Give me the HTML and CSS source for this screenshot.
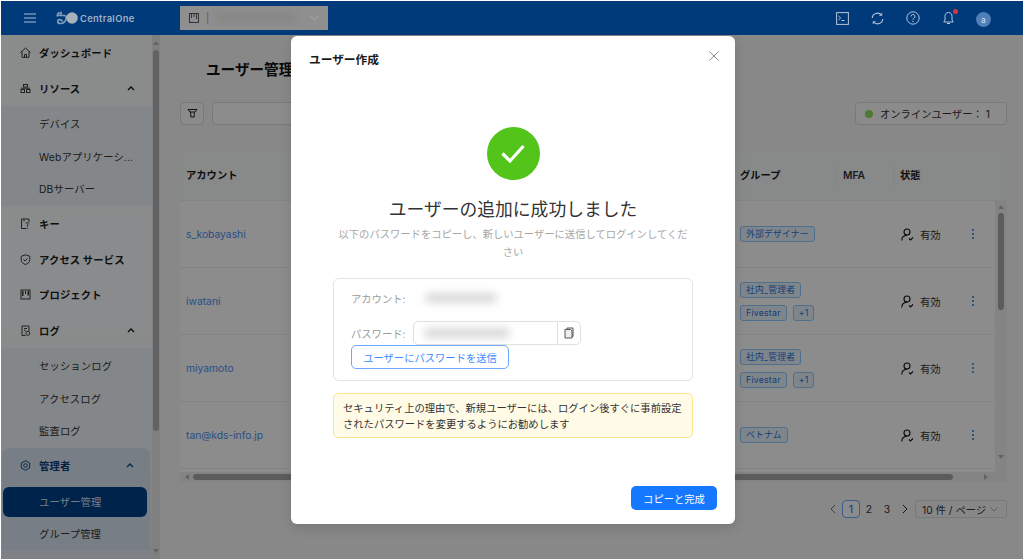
FILE: index.html
```html
<!DOCTYPE html>
<html lang="ja">
<head>
<meta charset="utf-8">
<title>ユーザー管理</title>
<link rel="stylesheet" href="styles.css">
</head>
<body>
<div class="app">
  <header class="topbar">
    <svg class="hamb" width="12" height="10" viewBox="0 0 12 10"><path d="M0 1h12M0 5h12M0 9h12" stroke="#a9bdd4" stroke-width="1.1"/></svg>
    <div class="logo">
      <svg width="22" height="14" viewBox="0 0 22 14"><path d="M1.200 5.500c.2-2.500 1.300-3.600 2.600-3.800M5 .8v3.500M1.500 4.500h7c1.300 0 1.700 1 1.700 2.500 0 3-2.500 5.500-5.500 5.500-1.700 0-3-.8-3-2s1-1.800 2-1.800c1.300 0 2.200.7 2.800 1.800" fill="none" stroke="#7f9cbd" stroke-width="1.700"/><circle cx="16" cy="7" r="5.800" fill="#a9b1ba"/></svg>
      <span class="logo-text">CentralOne</span>
    </div>
    <div class="tenant">
      <svg width="10" height="10" viewBox="0 0 10 10"><rect x=".5" y=".5" width="9" height="9" fill="none" stroke="#333" stroke-width="1"/><path d="M2.500 1v4M5 1v3M7.500 1v5" stroke="#333" stroke-width="1"/></svg>
      <span class="tenant-bar">|</span>
      <span class="tenant-blur"></span>
      <svg class="tenant-caret" width="9" height="6" viewBox="0 0 9 6"><path d="M.5 1l4 4 4-4" fill="none" stroke="#a8a8a8" stroke-width="1"/></svg>
    </div>
    <div class="top-icons">
      <svg width="13" height="13" viewBox="0 0 13 13"><rect x=".6" y=".6" width="11.800" height="11.800" fill="none" stroke="#b5c5d8" stroke-width="1"/><path d="M2.500 4l2.200 2-2.200 2M5.500 8.500h3" fill="none" stroke="#b5c5d8" stroke-width="1"/></svg>
      <svg width="13" height="13" viewBox="0 0 13 13"><path d="M1.200 6a5.300 5.300 0 0 1 9.300-3M11.800 7a5.300 5.300 0 0 1-9.300 3" fill="none" stroke="#b5c5d8" stroke-width="1.100"/><path d="M10.800 1v2.400H8.400M2.200 12V9.600h2.400" fill="none" stroke="#b5c5d8" stroke-width=".9"/></svg>
      <svg width="14" height="14" viewBox="0 0 14 14"><circle cx="7" cy="7" r="6.200" fill="none" stroke="#b5c5d8" stroke-width="1"/><path d="M5 5.500a2 2 0 1 1 3 1.700c-.7.400-1 .8-1 1.500" fill="none" stroke="#b5c5d8" stroke-width="1"/><circle cx="7" cy="10.500" r=".7" fill="#b5c5d8"/></svg>
      <span class="bell">
        <svg width="11" height="14" viewBox="0 0 11 14"><path d="M5.500 1.500c-2.400 0-3.500 1.800-3.500 3.800v3.700L.8 11h9.400L9 9V5.300c0-2-1.100-3.800-3.500-3.800zM4 12.500h3" fill="none" stroke="#b5c5d8" stroke-width="1"/></svg>
        <i class="bell-dot"></i>
      </span>
      <span class="avatar">a</span>
    </div>
  </header>

  <div class="body">
    <aside class="sidebar">
      <nav class="menu">
        <div class="item"><svg class="ic" viewBox="0 0 11 11"><path d="M.5 5.500L5.500 1l5 4.500M2 4.500v5.800h7V4.500M4.500 10.300V7.500h2v2.800" /></svg><span>ダッシュボード</span></div>
        <div class="item"><svg class="ic" viewBox="0 0 11 11"><rect x="3.500" y="1.500" width="4" height="2.500"/><rect x="1" y="6.500" width="3.500" height="3"/><rect x="6.500" y="6.500" width="3.500" height="3"/><path d="M1 5.200h9"/></svg><span>リソース</span><svg class="chev" viewBox="0 0 8 5"><path d="M1 4l3-3 3 3"/></svg></div>
        <div class="subs">
          <div class="sub">デバイス</div>
          <div class="sub">Webアプリケーシ...</div>
          <div class="sub">DBサーバー</div>
        </div>
        <div class="item"><svg class="ic" viewBox="0 0 11 11"><path d="M6.500 10.500H1.500V1h7.500v3.500M4 1v2.500M6 5.500a1.200 1.200 0 1 1 1.500 1.500v1.500M7.500 9.500v1"/></svg><span>キー</span></div>
        <div class="item"><svg class="ic" viewBox="0 0 11 11"><path d="M5.500.8l4.300 1.500v3.500c0 2.300-2 4-4.300 4.700-2.300-.7-4.300-2.400-4.300-4.700V2.300zM3.500 5.500l1.500 1.500 2.500-2.500"/></svg><span>アクセス サービス</span></div>
        <div class="item"><svg class="ic ic-dark" viewBox="0 0 11 11"><rect x="1" y="1" width="9" height="9"/><path d="M2 2h1.500v5H2zM5 2h1v3H5zM7.500 2H9v4.500H7.500z" class="ic-fill"/></svg><span>プロジェクト</span></div>
        <div class="item"><svg class="ic" viewBox="0 0 11 11"><path d="M9 6V1H2v9.500h3.500M4 3.500h3M4 5.500h1.500"/><circle cx="7.800" cy="8.300" r="2"/></svg><span>ログ</span><svg class="chev" viewBox="0 0 8 5"><path d="M1 4l3-3 3 3"/></svg></div>
        <div class="subs">
          <div class="sub">セッションログ</div>
          <div class="sub">アクセスログ</div>
          <div class="sub">監査ログ</div>
        </div>
        <div class="admin">
          <div class="item item-admin"><svg class="ic" viewBox="0 0 11 11"><path d="M5.500.7l4.200 2.400v4.800l-4.200 2.400-4.200-2.400V3.100z"/><circle cx="5.500" cy="5.500" r="1.800"/></svg><span>管理者</span><svg class="chev" viewBox="0 0 8 5"><path d="M1 4l3-3 3 3"/></svg></div>
          <div class="sub active">ユーザー管理</div>
          <div class="sub">グループ管理</div>
        </div>
      </nav>
      <div class="side-scroll">
        <i class="arrow-up"></i>
        <i class="side-thumb"></i>
        <i class="arrow-down"></i>
      </div>
    </aside>

    <main class="main">
      <h1 class="page-title">ユーザー管理</h1>
      <div class="toolbar">
        <button class="filter-btn"><svg width="11" height="11" viewBox="0 0 11 11"><path d="M1 1.500h9L7.200 5v4H3.800V5z" fill="none" stroke="#222" stroke-width="1"/><path d="M3 4h5" stroke="#222" stroke-width="1"/></svg></button>
        <div class="search"></div>
        <div class="online"><i class="online-dot"></i><span>オンラインユーザー：</span><span>1</span></div>
      </div>
      <section class="table">
        <div class="thead">
          <div class="th">アカウント</div>
          <div class="th">グループ</div>
          <div class="th th-sep th-mfa">MFA</div>
          <div class="th th-sep">状態</div>
        </div>
        <div class="rows">
          <div class="row">
            <a class="acct">s_kobayashi</a>
            <div class="tags"><span class="tag">外部デザイナー</span></div>
            <div></div>
            <div class="state"><svg class="user-ic" viewBox="0 0 13 13"><circle cx="6" cy="4" r="3"/><path d="M.8 12.500c0-3 2-5 5.200-5.200M8 10.500l1.500 1.500 2.500-2.500"/></svg>有効</div>
            <div class="dots"><i></i><i></i><i></i></div>
          </div>
          <div class="row">
            <a class="acct">iwatani</a>
            <div class="tags"><span class="tag">社内_管理者</span><span class="tag">Fivestar</span><span class="tag">+1</span></div>
            <div></div>
            <div class="state"><svg class="user-ic" viewBox="0 0 13 13"><circle cx="6" cy="4" r="3"/><path d="M.8 12.500c0-3 2-5 5.200-5.200M8 10.500l1.500 1.500 2.500-2.500"/></svg>有効</div>
            <div class="dots"><i></i><i></i><i></i></div>
          </div>
          <div class="row">
            <a class="acct">miyamoto</a>
            <div class="tags"><span class="tag">社内_管理者</span><span class="tag">Fivestar</span><span class="tag">+1</span></div>
            <div></div>
            <div class="state"><svg class="user-ic" viewBox="0 0 13 13"><circle cx="6" cy="4" r="3"/><path d="M.8 12.500c0-3 2-5 5.200-5.200M8 10.500l1.500 1.500 2.500-2.500"/></svg>有効</div>
            <div class="dots"><i></i><i></i><i></i></div>
          </div>
          <div class="row">
            <a class="acct">tan@kds-info.jp</a>
            <div class="tags"><span class="tag">ベトナム</span></div>
            <div></div>
            <div class="state"><svg class="user-ic" viewBox="0 0 13 13"><circle cx="6" cy="4" r="3"/><path d="M.8 12.500c0-3 2-5 5.200-5.200M8 10.500l1.500 1.500 2.500-2.500"/></svg>有効</div>
            <div class="dots"><i></i><i></i><i></i></div>
          </div>
        </div>
        <div class="vscroll"><i class="arrow-up"></i><i class="v-thumb"></i><i class="arrow-down"></i></div>
        <div class="hscroll"><i class="arrow-left"></i><i class="h-thumb"></i><i class="arrow-right"></i></div>
        <div class="corner"></div>
      </section>
      <div class="pager">
        <svg class="pg-arrow" viewBox="0 0 6 10"><path d="M5 1L1 5l4 4" stroke="#777"/></svg>
        <span class="pg pg-on">1</span>
        <span class="pg">2</span>
        <span class="pg">3</span>
        <svg class="pg-arrow" viewBox="0 0 6 10"><path d="M1 1l4 4-4 4" stroke="#222"/></svg>
        <div class="pg-size"><span>10 件 / ページ</span><svg width="8" height="5" viewBox="0 0 8 5"><path d="M.5.500L4 4 7.500.500" fill="none" stroke="#aaa" stroke-width="1"/></svg></div>
      </div>
    </main>
  </div>

  <div class="mask"></div>

  <div class="modal">
    <div class="modal-head">
      <span class="modal-title">ユーザー作成</span>
      <svg class="close" width="10" height="10" viewBox="0 0 10 10"><path d="M.5.500l9 9M9.500.500l-9 9" stroke="#8c8c8c" stroke-width="1"/></svg>
    </div>
    <div class="result">
      <div class="result-icon">
        <svg width="26" height="21" viewBox="0 0 26 21"><path d="M2.500 10.500l7.500 7.500L23.500 3" fill="none" stroke="#fff" stroke-width="3.200"/></svg>
      </div>
      <div class="result-title">ユーザーの追加に成功しました</div>
      <div class="result-sub">以下のパスワードをコピーし、新しいユーザーに送信してログインしてください</div>
    </div>
    <div class="cred">
      <div class="cred-line">
        <span class="cred-label">アカウント:</span>
        <span class="cred-blur"></span>
      </div>
      <div class="cred-pass">
        <span class="cred-label">パスワード:</span>
        <div class="pw-group">
          <div class="pw-input"><span class="pw-blur"></span></div>
          <button class="pw-copy"><svg width="10" height="12" viewBox="0 0 10 12"><path d="M3 2.500V1h6v8.500H8M1 2.500h5.500L8 4v7H1z" fill="#eee" stroke="#555" stroke-width="1"/></svg></button>
        </div>
      </div>
      <button class="send">ユーザーにパスワードを送信</button>
    </div>
    <div class="notice">セキュリティ上の理由で、新規ユーザーには、ログイン後すぐに事前設定されたパスワードを変更するようにお勧めします</div>
    <div class="modal-foot"><button class="primary">コピーと完成</button></div>
  </div>
</div>
</body>
</html>
```
FILE: styles.css
```css
* { box-sizing: border-box; }
html, body { margin: 0; height: 100%; background: #fff; }
body {
  padding: 1px 0 1px 1px;
  font-family: Inter, "Noto Sans CJK JP", sans-serif;
  font-size: 10.3px;
  color: #222;
  overflow: hidden;
}
button { font: inherit; cursor: pointer; padding: 0; }
.app {
  position: relative;
  width: 1022px;
  height: 558px;
  display: flex;
  flex-direction: column;
  overflow: hidden;
}

/* top bar */
.topbar {
  position: relative;
  z-index: 3;
  flex: none;
  height: 34px;
  background: #003a7a;
  display: flex;
  align-items: center;
  padding-left: 23px;
}
.hamb { flex: none; margin-right: 20px; }
.logo { display: flex; align-items: center; gap: 2px; width: 125px; }
.logo-text { color: #9fb2c8; font-size: 9.3px; font-weight: 600; letter-spacing: .35px; }
.tenant {
  width: 148px;
  height: 24px;
  background: #8f8f8f;
  display: flex;
  align-items: center;
  padding: 0 9px 0 9px;
  margin-left: -1px;
}
.tenant-bar { color: #6a5a40; margin-left: 7px; }
.tenant-blur { flex: 1; height: 12px; margin: 0 14px 0 6px; background: #888; filter: blur(3px); }
.top-icons {
  margin-left: auto;
  display: flex;
  align-items: center;
  gap: 22px;
  padding-right: 32px;
}
.top-icons svg { display: block; }
.bell { position: relative; display: block; margin-left: 1px; }
.bell-dot {
  position: absolute;
  top: -2px;
  right: -4px;
  width: 5px;
  height: 5px;
  border-radius: 50%;
  background: #d9363e;
}
.avatar {
  width: 15px;
  height: 15px;
  border-radius: 50%;
  background: #4f7fb8;
  color: #d5e1ee;
  font-size: 8.5px;
  display: flex;
  align-items: center;
  justify-content: center;
  margin-top: 3px;
}

/* layout */
.body { flex: 1; display: flex; min-height: 0; }
.sidebar {
  flex: none;
  width: 159px;
  display: flex;
  background: linear-gradient(#fcffff 0%, #fbfeff 55%, #e6ecf3 100%);
}
.menu { width: 151px; flex: none; overflow: hidden; }
.item {
  height: 35.5px;
  display: flex;
  align-items: center;
  padding-left: 19px;
  font-weight: 700;
  color: #1c1c1c;
  letter-spacing: .15px;
}
.ic {
  width: 11px;
  height: 11px;
  flex: none;
  margin-right: 8px;
  fill: none;
  stroke: #3c3c3c;
  stroke-width: 1;
}
.ic-fill { fill: #3c3c3c; stroke: none; }
.chev {
  width: 8px;
  height: 5px;
  margin-left: auto;
  margin-right: 17px;
  fill: none;
  stroke: #111;
  stroke-width: 1.300;
}
.subs { background: #f1f6fa; padding: 1.250px 0; }
.sub {
  height: 32.5px;
  display: flex;
  align-items: center;
  padding-left: 38px;
  color: #333;
  letter-spacing: .15px;
}
.admin {
  margin: 0 2px 0 1px;
  border-radius: 7px 7px 0 0;
  background: #dbe6f2;
}
.item-admin { padding-left: 18px; color: #0a3c78; }
.item-admin .ic { stroke: #0a4a90; }
.item-admin .chev { stroke: #0a4a90; margin-right: 16px; }
.admin .sub { padding-left: 37px; }
.sub.active {
  margin: 3px 3px 1px 1px;
  padding-left: 36px;
  height: 30px;
  border-radius: 6px;
  background: #00418b;
  color: #d8e2ee;
}
.side-scroll {
  width: 8px;
  flex: none;
  background: #e9e9e9;
  position: relative;
  display: flex;
  flex-direction: column;
  align-items: center;
  padding: 6px 0;
}
.side-thumb { width: 6px; height: 381px; margin-top: 5px; border-radius: 3px; background: #b2b2b2; }
.side-scroll .arrow-down { margin-top: auto; }
.arrow-up, .arrow-down, .arrow-left, .arrow-right { display: block; width: 0; height: 0; flex: none; }
.arrow-up { border: 3px solid transparent; border-top: 0; border-bottom: 4px solid #b5b5b5; border-left-width: 3px; }
.arrow-down { border: 3px solid transparent; border-bottom: 0; border-top: 4px solid #b5b5b5; }
.arrow-left { border: 3px solid transparent; border-left: 0; border-right: 4px solid #b5b5b5; }
.arrow-right { border: 3px solid transparent; border-right: 0; border-left: 4px solid #b5b5b5; }

.main {
  flex: 1;
  min-width: 0;
  background: #f8f8f8;
  padding: 0 16px 0 20px;
  display: flex;
  flex-direction: column;
}
.page-title {
  margin: 24px 0 0 26px;
  height: 22px;
  line-height: 22px;
  font-size: 14.6px;
  font-weight: 700;
  color: #111;
}
.toolbar {
  margin-top: 21px;
  height: 23px;
  display: flex;
  align-items: stretch;
}
.filter-btn {
  width: 24px;
  background: #fdfdfd;
  border: 1px solid #ddd;
  border-radius: 4px;
  display: flex;
  align-items: center;
  justify-content: center;
}
.search {
  width: 300px;
  margin-left: 8px;
  border: 1px solid #ddd;
  border-radius: 4px;
  background: #fff;
}
.online {
  margin-left: auto;
  width: 152px;
  border: 1px solid #ddd;
  border-radius: 4px;
  background: #fdfdfd;
  display: flex;
  align-items: center;
  padding: 0 16px 0 9px;
  color: #333;
}
.online-dot { width: 8px; height: 8px; border-radius: 50%; background: #8fdc5c; margin-right: 7px; flex: none; }
.online span:last-child { margin-left: auto; }

.table {
  margin-top: 25px;
  height: 332px;
  background: #fff;
  border-radius: 6px 6px 0 0;
  display: grid;
  grid-template-columns: 815px 12px;
  grid-template-rows: 51px 271px 10px;
}
.thead {
  grid-column: 1 / 3;
  display: grid;
  grid-template-columns: 554px 102px 57px 114px;
  align-items: center;
  background: #f8f9fa;
  border-bottom: 1px solid #f0f0f0;
  border-radius: 6px 6px 0 0;
  font-weight: 700;
  color: #1b1b1b;
}
.th { padding-left: 6px; height: 20px; line-height: 20px; }
.th-sep { border-left: 1px solid #eee; }
.th-mfa { font-weight: 600; color: #333; }
.rows { overflow: hidden; display: flex; flex-direction: column; }
.row {
  flex: none;
  height: 67px;
  display: grid;
  grid-template-columns: 554px 102px 57px 67px 35px;
  align-items: center;
  border-bottom: 1px solid #f0f0f0;
}
.acct { padding-left: 6px; color: #4b90f5; }
.tags { display: flex; flex-wrap: wrap; gap: 7px 6px; padding-left: 6px; }
.tag {
  height: 16px;
  line-height: 14px;
  padding: 0 5px;
  background: #e6f4ff;
  border: 1px solid #91caff;
  border-radius: 3px;
  color: #2a73d9;
  font-size: 8.8px;
  letter-spacing: .2px;
}
.state { display: flex; align-items: center; color: #333; padding-left: 8px; }
.user-ic { width: 13px; height: 13px; margin-right: 6px; fill: none; stroke: #111; stroke-width: 1.100; }
.dots { display: flex; flex-direction: column; align-items: center; gap: 2px; padding-right: 10px; }
.dots i { width: 2px; height: 2px; background: #5a9cf5; display: block; }
.vscroll {
  background: #f0f0f0;
  display: flex;
  flex-direction: column;
  align-items: center;
  padding: 4px 0 2px;
}
.v-thumb { width: 6px; height: 97px; margin-top: 4px; border-radius: 3px; background: #a8a8a8; display: block; }
.vscroll .arrow-down { margin-top: auto; margin-bottom: 11px; }
.hscroll {
  background: #f0f0f0;
  display: flex;
  align-items: center;
  padding: 0 5px;
}
.h-thumb { width: 760px; height: 6px; margin-left: 4px; border-radius: 3px; background: #a8a8a8; display: block; }
.hscroll .arrow-right { margin-left: auto; margin-right: 2px; }
.corner { background: #f0f0f0; }

.pager {
  margin-top: 18px;
  height: 18px;
  display: flex;
  align-items: center;
  justify-content: flex-end;
  color: #333;
}
.pg-arrow { width: 6px; height: 10px; margin: 0 6px; fill: none; stroke-width: 1; flex: none; }
.pg { width: 18px; height: 18px; display: flex; align-items: center; justify-content: center; }
.pg-on { border: 1px solid #69a9ff; border-radius: 4px; color: #2a7cf0; background: #fff; font-weight: 500; }
.pg-size {
  margin-left: 1px;
  width: 92px;
  height: 18px;
  border: 1px solid #ddd;
  border-radius: 3px;
  display: flex;
  align-items: center;
  justify-content: space-between;
  padding: 0 8px 0 6px;
  color: #333;
}

/* overlay */
.mask {
  position: absolute;
  left: 0;
  right: 0;
  top: 34px;
  bottom: 0;
  background: rgba(0, 0, 0, .45);
  z-index: 2;
}
.modal {
  position: absolute;
  z-index: 4;
  left: 290px;
  top: 35px;
  width: 444px;
  height: 488px;
  background: #fff;
  border-radius: 6px;
  box-shadow: 0 4px 12px rgba(0, 0, 0, .12);
  display: flex;
  flex-direction: column;
  padding: 0 18px 14px;
}
.modal-head {
  flex: none;
  height: 46px;
  display: flex;
  align-items: center;
  justify-content: space-between;
}
.modal-title { font-size: 11.700px; font-weight: 700; color: #1a1a1a; margin-top: -1px; }
.close { margin-right: -2px; margin-top: -6px; }
.result {
  flex: none;
  display: flex;
  flex-direction: column;
  align-items: center;
  padding: 0 24px;
  margin-top: 45px;
}
.result-icon {
  width: 53px;
  height: 53px;
  border-radius: 50%;
  background: #52c41a;
  display: flex;
  align-items: center;
  justify-content: center;
}
.result-title { font-size: 17.800px; line-height: 26px; margin-top: 17px; color: #333; text-align: center; }
.result-sub { width: 352px; line-height: 18px; margin-top: 2px; color: #a6a6a6; text-align: center; }
.cred {
  flex: none;
  margin: 17px 24px 0;
  width: 360px;
  height: 103px;
  border: 1px solid #e3e3e3;
  border-radius: 6px;
  padding: 9px 17px 0;
}
.cred-line { display: flex; align-items: center; height: 20px; }
.cred-label { width: 62px; flex: none; color: #9a9a9a; }
.cred-blur { width: 72px; height: 10px; margin-left: 12px; background: #d8d8d8; border-radius: 6px; filter: blur(4px); }
.cred-pass { display: flex; align-items: center; margin-top: 13px; }
.pw-group { display: flex; height: 24px; }
.pw-input {
  width: 145px;
  border: 1px solid #e0e0e0;
  border-radius: 5px 0 0 5px;
  display: flex;
  align-items: center;
  padding-left: 10px;
}
.pw-blur { width: 86px; height: 10px; background: #d8d8d8; border-radius: 6px; filter: blur(4px); }
.pw-copy {
  width: 24px;
  margin-left: -1px;
  background: #fff;
  border: 1px solid #e0e0e0;
  border-radius: 0 5px 5px 0;
  display: flex;
  align-items: center;
  justify-content: center;
}
.send {
  display: block;
  width: 158px;
  height: 24px;
  margin-top: 0;
  background: #fff;
  border: 1px solid #69a9ff;
  border-radius: 5px;
  color: #3b8bff;
}
.notice {
  flex: none;
  margin: 12px 24px 0;
  width: 360px;
  height: 45px;
  background: #fffbe6;
  border: 1px solid #ffe58f;
  border-radius: 5px;
  padding: 7px 8px 0 9px;
  line-height: 15.5px;
  color: #333;
}
.modal-foot { margin-top: auto; display: flex; justify-content: flex-end; }
.primary {
  width: 86px;
  height: 24px;
  border: 0;
  border-radius: 5px;
  background: #1677ff;
  color: #fff;
}
```
